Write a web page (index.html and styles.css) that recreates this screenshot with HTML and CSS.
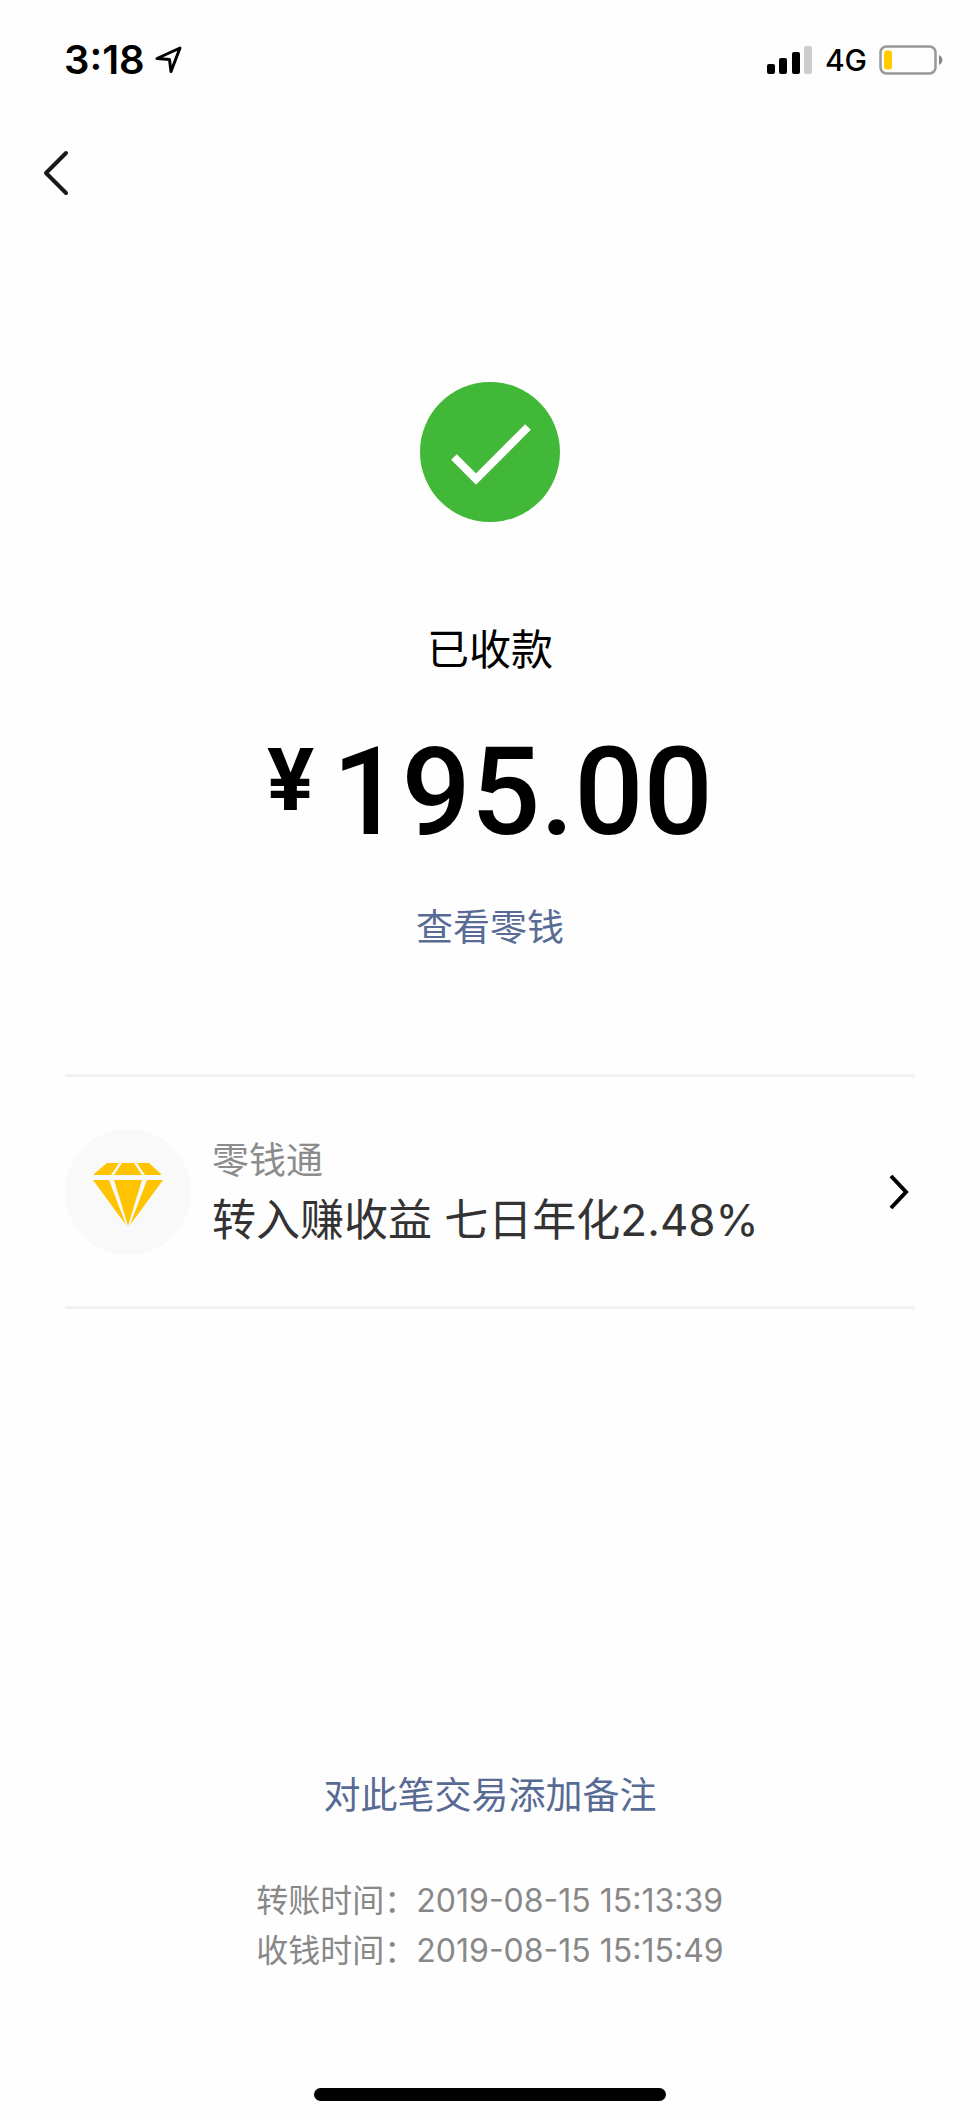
FILE: index.html
```html
<!DOCTYPE html>
<html lang="zh-CN">
<head>
<meta charset="utf-8">
<meta name="viewport" content="width=device-width, initial-scale=1">
<title>已收款</title>
<link rel="stylesheet" href="styles.css">
</head>
<body>
<div class="screen">
  <header class="status">
    <div class="status-left">
      <time class="clock">3:18</time>
      <svg class="locate" width="28" height="28" viewBox="0 0 28 28" aria-hidden="true"><path d="M2 12.500L25 2L16 25.500L14.500 13.500Z" fill="none" stroke="#000" stroke-width="3" stroke-linejoin="round"/></svg>
    </div>
    <div class="status-right">
      <svg width="46" height="28" viewBox="0 0 46 28" aria-hidden="true"><rect x="0" y="18" width="8" height="10" rx="2"/><rect x="12" y="12" width="8" height="16" rx="2"/><rect x="25" y="6" width="8" height="22" rx="2"/><rect x="37" y="0" width="8" height="28" rx="2" fill="#ccc"/></svg>
      <span class="network">4G</span>
      <svg width="64" height="30" viewBox="0 0 64 30" aria-hidden="true"><rect x="1.500" y="1.500" width="55" height="27" rx="6" fill="none" stroke="#999" stroke-width="2.500"/><rect x="5" y="5.500" width="8" height="19" rx="3" fill="#ffcc00"/><path d="M60 10C64.500 12 64.500 18 60 20Z" fill="#888"/></svg>
    </div>
  </header>
  <nav class="nav">
    <button class="back" type="button" aria-label="返回"><svg width="26" height="46" viewBox="0 0 26 46"><path d="M23 3L3 23L23 43" fill="none" stroke="#1a1a1a" stroke-width="4" stroke-linecap="round" stroke-linejoin="round"/></svg></button>
  </nav>
  <main class="main">
    <section class="result">
      <svg class="success" width="140" height="140" viewBox="0 0 140 140" aria-hidden="true"><circle cx="70" cy="70" r="70" fill="#41b837"/><path d="M34 75L56 97L108 45" fill="none" stroke="#fff" stroke-width="8" stroke-linejoin="miter"/></svg>
      <h1 class="title">已收款</h1>
      <p class="amount"><span class="currency">¥</span><span class="value">195.00</span></p>
      <a class="link" href="#balance">查看零钱</a>
    </section>
    <a class="promo" href="#fund">
      <span class="promo-icon"><svg width="70" height="64" viewBox="0 0 70 64" aria-hidden="true"><g fill="#ffc300"><path d="M14 0H26L18 12H1V11Z"/><path d="M29 0H41L49 12H21Z"/><path d="M44 0H56L68 11V12H52Z"/><path d="M0 17H16L33 62Z"/><path d="M21 17H49L35 63Z"/><path d="M54 17H70L37 62Z"/></g></svg></span>
      <span class="promo-text"><span class="promo-name">零钱通</span><span class="promo-desc">转入赚收益 七日年化2.48%</span></span>
      <svg class="chevron" width="20" height="36" viewBox="0 0 20 36" aria-hidden="true"><path d="M2 2L17 18L2 34" fill="none" stroke="#000" stroke-width="4"/></svg>
    </a>
  </main>
  <footer class="footer">
    <a class="link" href="#note">对此笔交易添加备注</a>
    <div class="times">
      <p>转账时间：2019-08-15 15:13:39</p>
      <p>收钱时间：2019-08-15 15:15:49</p>
    </div>
    <div class="home"></div>
  </footer>
</div>
</body>
</html>
```

FILE: styles.css
```css
* { box-sizing: border-box; }
body {
  margin: 0;
  background: #fefefe;
  color: #000;
  font-family: Inter, "Noto Sans CJK SC", sans-serif;
}
h1, p { margin: 0; font-weight: 400; }
a { text-decoration: none; color: inherit; }
svg { display: block; flex: none; }
.screen { min-height: 100vh; display: flex; flex-direction: column; }
.status {
  height: 120px;
  padding: 0 37px 0 64px;
  display: flex;
  align-items: center;
  justify-content: space-between;
}
.status-left, .status-right { display: flex; align-items: center; }
.status-left { gap: 10px; }
.status-right { gap: 12px; }
.clock { font-size: 40px; font-weight: 600; line-height: 40px; }
.network { font-size: 30px; font-weight: 500; line-height: 40px; }
.nav { height: 106px; padding: 0 43px; display: flex; align-items: center; }
.back { padding: 0; border: 0; background: none; cursor: pointer; }
.main { display: flex; flex-direction: column; padding: 0 65px; }
.result { display: flex; flex-direction: column; align-items: center; padding: 156px 0 120px; }
.title { margin-top: 100px; font-size: 42px; line-height: 56px; }
.amount {
  margin-top: 48px;
  display: flex;
  align-items: flex-start;
  gap: 18px;
  font-family: Roboto, sans-serif;
  font-weight: 500;
}
.currency { font-size: 88px; font-weight: 700; line-height: 108px; }
.value { font-size: 122px; line-height: 134px; }
.link { color: #576b95; font-size: 37px; line-height: 52px; }
.amount + .link { margin-top: 42px; }
.promo {
  height: 235px;
  border-top: 3px solid #f2f2f2;
  border-bottom: 3px solid #f2f2f2;
  display: flex;
  align-items: center;
  padding-right: 6px;
}
.promo-icon {
  width: 126px;
  height: 126px;
  padding-top: 6px;
  flex: none;
  border-radius: 50%;
  background: #f9f9f9;
  display: flex;
  align-items: center;
  justify-content: center;
}
.promo-text { flex: 1; margin-left: 21px; display: flex; flex-direction: column; }
.promo-name { font-size: 37px; line-height: 56px; color: #8c8c8c; }
.promo-desc { font-size: 44px; line-height: 62px; color: #333; }
.footer { margin-top: auto; display: flex; flex-direction: column; align-items: center; }
.times { margin-top: 54px; font-size: 32px; line-height: 50px; color: #888; }
.home {
  width: 36%;
  height: 13px;
  margin: 112px 0 22px;
  border-radius: 7px;
  background: #000;
}
```
